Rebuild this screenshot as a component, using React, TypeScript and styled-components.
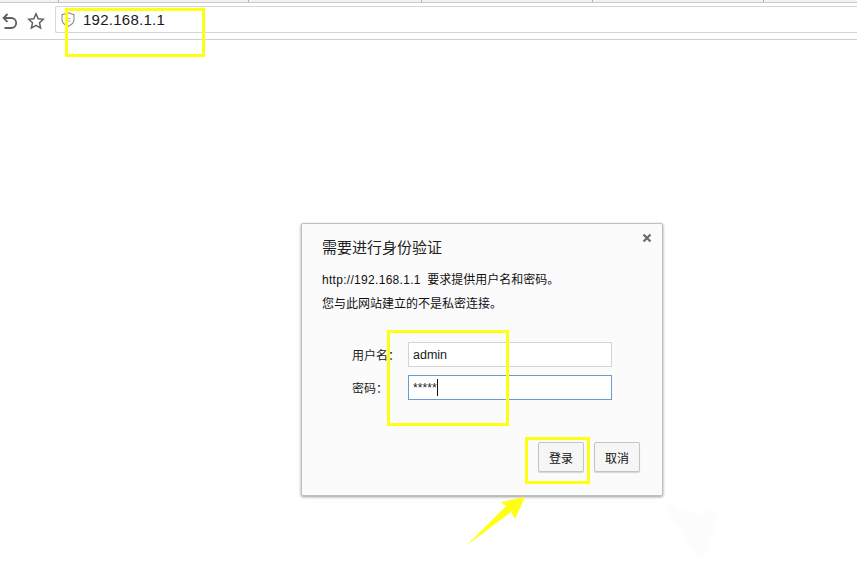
import React from "react";
import styled, { createGlobalStyle } from "styled-components";

const Global = createGlobalStyle`
  html, body { margin: 0; padding: 0; background: #fff; }
  body { font-family: "Liberation Sans", "Noto Sans CJK SC", sans-serif; color: #111; }
  #root { width: 857px; height: 564px; overflow: hidden; }
`;

const Page = styled.div`
  position: relative;
  width: 857px;
  height: 564px;
  overflow: hidden;
  background: #fff;
  display: flex;
  flex-direction: column;
`;

const TabStrip = styled.div`
  height: 2px;
  padding-left: 58px;
  display: flex;
  background: #f2f2f2;
  border-bottom: 1px solid #c9c9c9;
`;

const Tab = styled.div<{ $w: number }>`
  box-sizing: border-box;
  width: ${(p) => p.$w}px;
  border-left: 1px solid #b4b4b4;
`;

const Toolbar = styled.div`
  height: 36px;
  display: flex;
  align-items: center;
  padding-left: 2px;
  border-bottom: 1px solid #d0d0d0;
  background: #fff;
`;

const IconSlot = styled.div<{ $w: number }>`
  width: ${(p) => p.$w}px;
  height: 20px;
  display: flex;
  align-items: center;
  color: #5f5f5f;
`;

const Omnibox = styled.div`
  flex: 1;
  height: 25px;
  margin-top: -3px;
  display: flex;
  align-items: center;
  gap: 8px;
  padding-left: 5px;
  border: 1px solid #d6d6d6;
  border-right: none;
  border-radius: 2px 0 0 2px;
`;

const Url = styled.span`
  font-size: 15px;
  letter-spacing: 0.25px;
  color: #1a1a1a;
`;

const Content = styled.div`
  flex: 1;
  padding: 183px 0 0 301px;
`;

const Dialog = styled.div`
  position: relative;
  box-sizing: border-box;
  width: 362px;
  height: 273px;
  padding: 14px 22px 0 20px;
  background: #fbfbfb;
  border: 1px solid #c0c0c0;
  border-radius: 2px;
  box-shadow: 0 1px 3px rgba(0, 0, 0, 0.4);
`;

const Close = styled.div`
  position: absolute;
  top: 9px;
  right: 10px;
  width: 10px;
  height: 10px;
  color: #6b6b6b;
  display: flex;
`;

const Title = styled.h1`
  margin: 0;
  font-size: 15px;
  line-height: 20px;
  font-weight: 400;
  color: #222;
`;

const Message = styled.p`
  margin: 0;
  font-size: 12px;
  line-height: 24px;
  color: #111;
`;

const Address = styled.span`
  letter-spacing: 0.3px;
  margin-right: 3px;
`;

const Intro = styled.div`
  margin-top: 10px;
`;

const Form = styled.div`
  margin-top: 26px;
  display: grid;
  grid-template-columns: 56px 204px;
  row-gap: 8px;
  padding-left: 30px;
  align-items: center;
`;

const Label = styled.label`
  font-size: 12px;
  color: #222;
`;

const Field = styled.div<{ $focus?: boolean }>`
  box-sizing: border-box;
  height: 25px;
  padding-left: 4px;
  display: flex;
  align-items: center;
  background: #fff;
  border: 1px solid ${(p) => (p.$focus ? "#6a9bd0" : "#d4d4d4")};
  font-size: 12.5px;
  color: #222;
`;

const Stars = styled.span`
  font-size: 12px;
  line-height: 10px;
  letter-spacing: 0.1px;
`;

const Caret = styled.span`
  width: 1px;
  height: 17px;
  background: #111;
`;

const Actions = styled.div`
  margin-top: 42px;
  display: flex;
  justify-content: flex-end;
  gap: 10px;
`;

const Button = styled.button`
  box-sizing: border-box;
  width: 46px;
  height: 30px;
  padding: 0;
  font: 12px "Liberation Sans", "Noto Sans CJK SC", sans-serif;
  color: #111;
  background: #f6f6f6;
  border: 1px solid #c4c4c4;
  border-radius: 2px;
  box-shadow: 0 1px 1px rgba(0, 0, 0, 0.15);
`;

const Highlight = styled.div<{ $x: number; $y: number; $w: number; $h: number }>`
  position: absolute;
  box-sizing: border-box;
  left: ${(p) => p.$x}px;
  top: ${(p) => p.$y}px;
  width: ${(p) => p.$w}px;
  height: ${(p) => p.$h}px;
  border: 3px solid #ffff14;
  pointer-events: none;
`;

const Overlay = styled.svg`
  position: absolute;
  left: 0;
  top: 0;
  pointer-events: none;
`;

const Watermark = styled.path`
  fill: #fcfcfc;
  filter: blur(2px);
`;

export default function App() {
  return (
    <Page>
      <Global />
      <TabStrip>
        <Tab $w={190} />
        <Tab $w={173} />
        <Tab $w={171} />
        <Tab $w={171} />
        <Tab $w={90} />
      </TabStrip>
      <Toolbar>
        <IconSlot $w={25}>
          <svg width="16" height="18" viewBox="0 0 16 18" fill="none" stroke="currentColor" strokeWidth="1.8">
            <path d="M5.5 2 1.6 6l3.9 3.8" />
            <path d="M1.8 6h7.4a5 5 0 0 1 0 10H2.5" />
          </svg>
        </IconSlot>
        <IconSlot $w={28}>
          <svg width="18" height="18" viewBox="0 0 18 18" fill="none" stroke="currentColor" strokeWidth="1.5">
            <path d="M9 1.8l2.2 4.9 5.2.6-3.9 3.5 1.1 5.3L9 13.4l-4.6 2.7 1.1-5.3L1.6 7.3l5.2-.6z" />
          </svg>
        </IconSlot>
        <Omnibox>
          <svg width="14" height="15" viewBox="0 0 14 15" fill="none">
            <path d="M7 .8 13 2.6v5c0 3.2-2.5 5.4-6 6.7-3.5-1.3-6-3.500-6-6.700v-5z" stroke="#8a8a8a" strokeWidth="1.1" />
            <path d="M4.5 6.5h5M4.5 9h5" stroke="#b0b0b0" strokeWidth="1" />
          </svg>
          <Url>192.168.1.1</Url>
        </Omnibox>
      </Toolbar>
      <Content>
        <Dialog>
          <Close>
            <svg width="10" height="10" viewBox="0 0 10 10" stroke="currentColor" strokeWidth="2.2">
              <path d="M1.5 1.5l7 7M8.5 1.5l-7 7" />
            </svg>
          </Close>
          <Title>需要进行身份验证</Title>
          <Intro>
            <Message>
              <Address>http://192.168.1.1</Address> 要求提供用户名和密码。
            </Message>
            <Message>您与此网站建立的不是私密连接。</Message>
          </Intro>
          <Form>
            <Label>用户名：</Label>
            <Field>admin</Field>
            <Label>密码：</Label>
            <Field $focus>
              <Stars>*****</Stars>
              <Caret />
            </Field>
          </Form>
          <Actions>
            <Button>登录</Button>
            <Button>取消</Button>
          </Actions>
        </Dialog>
      </Content>
      <Highlight $x={65} $y={8} $w={140} $h={49} />
      <Highlight $x={387} $y={330} $w={122} $h={96} />
      <Highlight $x={525} $y={437} $w={65} $h={47} />
      <Overlay width="857" height="564" viewBox="0 0 857 564">
        <path d="M466 546 L506 506 L501 502 L525 497 L515 519 L511 512 Z" fill="#ffff14" />
        <Watermark d="M662 498 L680 510 L700 514 L716 506 L714 530 L702 561 L690 545 L672 520 Z" />
      </Overlay>
    </Page>
  );
}
